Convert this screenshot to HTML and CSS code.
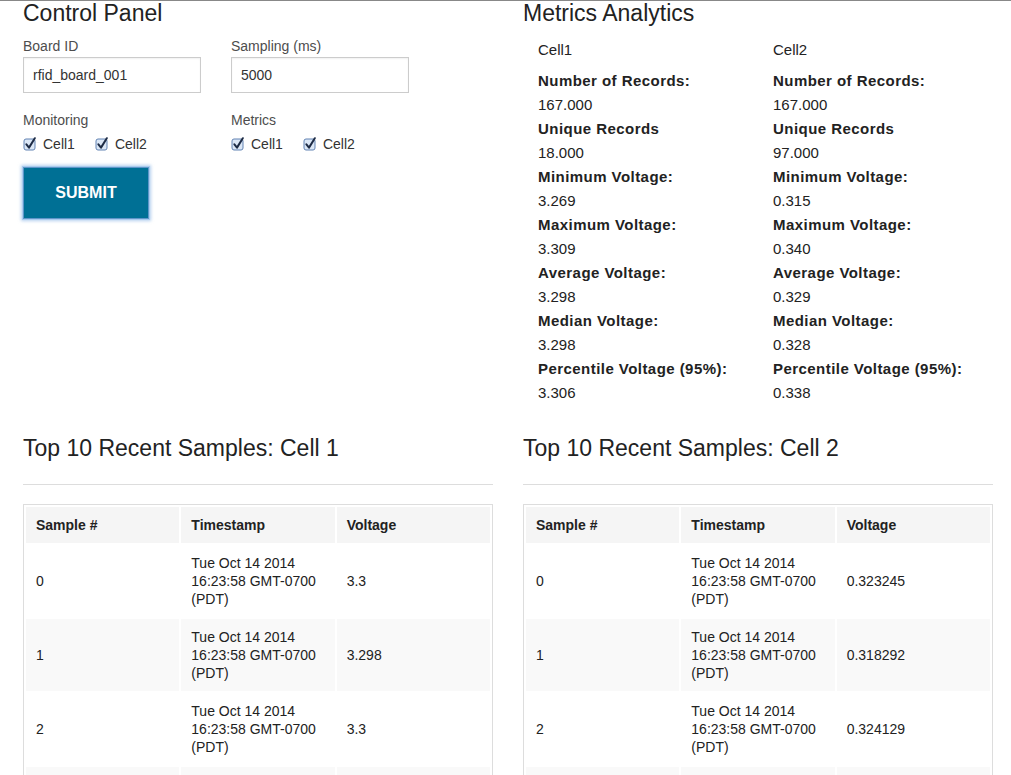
FILE: index.html
```html
<!DOCTYPE html>
<html>
<head>
<meta charset="utf-8">
<title>Dashboard</title>
<link rel="stylesheet" href="styles.css">
</head>
<body>
<div class="page">
  <div class="top-row">
    <section class="col">
      <h1 class="title">Control Panel</h1>
      <div class="form-grid">
        <div class="field">
          <label class="field-label">Board ID</label>
          <input class="text-input" type="text" value="rfid_board_001">
        </div>
        <div class="field">
          <label class="field-label">Sampling (ms)</label>
          <input class="text-input" type="text" value="5000">
        </div>
        <div class="field">
          <div class="field-label group-label">Monitoring</div>
          <div class="checks">
            <label class="check"><svg class="cb" viewBox="0 0 14 14" width="14" height="14"><rect x="1" y="2" width="11" height="11" rx="2" fill="#dbe7f6" stroke="#6283b3"/><path d="M3.4 7.4 L6 10.6 L11.8 1.2" fill="none" stroke="#1d2b45" stroke-width="2" stroke-linecap="round" stroke-linejoin="round"/></svg>Cell1</label>
            <label class="check"><svg class="cb" viewBox="0 0 14 14" width="14" height="14"><rect x="1" y="2" width="11" height="11" rx="2" fill="#dbe7f6" stroke="#6283b3"/><path d="M3.4 7.4 L6 10.6 L11.8 1.2" fill="none" stroke="#1d2b45" stroke-width="2" stroke-linecap="round" stroke-linejoin="round"/></svg>Cell2</label>
          </div>
        </div>
        <div class="field">
          <div class="field-label group-label">Metrics</div>
          <div class="checks">
            <label class="check"><svg class="cb" viewBox="0 0 14 14" width="14" height="14"><rect x="1" y="2" width="11" height="11" rx="2" fill="#dbe7f6" stroke="#6283b3"/><path d="M3.4 7.4 L6 10.6 L11.8 1.2" fill="none" stroke="#1d2b45" stroke-width="2" stroke-linecap="round" stroke-linejoin="round"/></svg>Cell1</label>
            <label class="check"><svg class="cb" viewBox="0 0 14 14" width="14" height="14"><rect x="1" y="2" width="11" height="11" rx="2" fill="#dbe7f6" stroke="#6283b3"/><path d="M3.4 7.4 L6 10.6 L11.8 1.2" fill="none" stroke="#1d2b45" stroke-width="2" stroke-linecap="round" stroke-linejoin="round"/></svg>Cell2</label>
          </div>
        </div>
      </div>
      <button class="submit" type="button">SUBMIT</button>
    </section>

    <section class="col">
      <h1 class="title">Metrics Analytics</h1>
      <div class="metrics">
        <div class="metric-col">
          <div class="cell-name">Cell1</div>
          <div class="m-label">Number of Records:</div><div class="m-value">167.000</div>
          <div class="m-label">Unique Records</div><div class="m-value">18.000</div>
          <div class="m-label">Minimum Voltage:</div><div class="m-value">3.269</div>
          <div class="m-label">Maximum Voltage:</div><div class="m-value">3.309</div>
          <div class="m-label">Average Voltage:</div><div class="m-value">3.298</div>
          <div class="m-label">Median Voltage:</div><div class="m-value">3.298</div>
          <div class="m-label">Percentile Voltage (95%):</div><div class="m-value">3.306</div>
        </div>
        <div class="metric-col">
          <div class="cell-name">Cell2</div>
          <div class="m-label">Number of Records:</div><div class="m-value">167.000</div>
          <div class="m-label">Unique Records</div><div class="m-value">97.000</div>
          <div class="m-label">Minimum Voltage:</div><div class="m-value">0.315</div>
          <div class="m-label">Maximum Voltage:</div><div class="m-value">0.340</div>
          <div class="m-label">Average Voltage:</div><div class="m-value">0.329</div>
          <div class="m-label">Median Voltage:</div><div class="m-value">0.328</div>
          <div class="m-label">Percentile Voltage (95%):</div><div class="m-value">0.338</div>
        </div>
      </div>
    </section>
  </div>

  <div class="bottom-row">
    <section class="col">
      <h2 class="title">Top 10 Recent Samples: Cell 1</h2>
      <hr class="rule">
      <table class="samples">
        <thead><tr><th>Sample #</th><th>Timestamp</th><th>Voltage</th></tr></thead>
        <tbody>
          <tr><td>0</td><td>Tue Oct 14 2014 16:23:58 GMT-0700 (PDT)</td><td>3.3</td></tr>
          <tr><td>1</td><td>Tue Oct 14 2014 16:23:58 GMT-0700 (PDT)</td><td>3.298</td></tr>
          <tr><td>2</td><td>Tue Oct 14 2014 16:23:58 GMT-0700 (PDT)</td><td>3.3</td></tr>
          <tr><td>3</td><td>Tue Oct 14 2014 16:23:58 GMT-0700 (PDT)</td><td>3.298</td></tr>
        </tbody>
      </table>
    </section>
    <section class="col">
      <h2 class="title">Top 10 Recent Samples: Cell 2</h2>
      <hr class="rule">
      <table class="samples">
        <thead><tr><th>Sample #</th><th>Timestamp</th><th>Voltage</th></tr></thead>
        <tbody>
          <tr><td>0</td><td>Tue Oct 14 2014 16:23:58 GMT-0700 (PDT)</td><td>0.323245</td></tr>
          <tr><td>1</td><td>Tue Oct 14 2014 16:23:58 GMT-0700 (PDT)</td><td>0.318292</td></tr>
          <tr><td>2</td><td>Tue Oct 14 2014 16:23:58 GMT-0700 (PDT)</td><td>0.324129</td></tr>
          <tr><td>3</td><td>Tue Oct 14 2014 16:23:58 GMT-0700 (PDT)</td><td>0.329411</td></tr>
        </tbody>
      </table>
    </section>
  </div>
</div>
</body>
</html>
```

FILE: styles.css
```css
html, body {
  margin: 0;
  padding: 0;
  background: #fff;
}
body {
  font-family: "Liberation Sans", Arial, Helvetica, sans-serif;
  color: #222;
  border-top: 1px solid #888;
  overflow: hidden;
}
.page {
  padding: 0 0 0 23px;
}
.top-row, .bottom-row {
  display: grid;
  grid-template-columns: 470px 470px;
  column-gap: 30px;
}
.bottom-row {
  margin-top: 31px;
}
.title {
  margin: 0;
  font-size: 23px;
  line-height: 24px;
  font-weight: normal;
  color: #222;
}

/* control panel */
.form-grid {
  display: grid;
  grid-template-columns: 178px 178px;
  column-gap: 30px;
  row-gap: 18px;
  margin-top: 12px;
}
.field {
  display: flex;
  flex-direction: column;
}
.field-label {
  font-size: 14px;
  line-height: 18px;
  color: #4d4d4d;
  margin-bottom: 2px;
}
.group-label {
  margin-bottom: 6px;
}
.text-input {
  box-sizing: border-box;
  width: 178px;
  height: 36px;
  margin: 0;
  padding: 0 9px;
  border: 1px solid #ccc;
  border-radius: 0;
  font-family: "Liberation Sans", Arial, sans-serif;
  font-size: 14px;
  color: #333;
  background: #fff;
  box-shadow: inset 0 1px 2px rgba(0,0,0,0.06);
}
.checks {
  display: flex;
  gap: 20px;
}
.check {
  display: flex;
  align-items: center;
  gap: 6px;
  font-size: 14px;
  line-height: 18px;
  color: #333;
}
.cb {
  display: block;
  margin-top: -1px;
}
.submit {
  display: block;
  margin-top: 14px;
  width: 126px;
  height: 52px;
  box-sizing: border-box;
  background: #007095;
  border: 1px solid #5f96c8;
  box-shadow: 0 0 0 1px #a9cbee, 0 0 3px 2px rgba(120,170,225,0.55);
  color: #fff;
  font-family: "Liberation Sans", Arial, sans-serif;
  font-weight: bold;
  font-size: 16px;
  padding: 0;
}

/* metrics */
.metrics {
  display: grid;
  grid-template-columns: 235px 235px;
  margin-top: 13px;
}
.metric-col {
  padding-left: 15px;
  font-size: 15px;
  line-height: 24px;
}
.cell-name {
  margin-bottom: 7px;
}
.m-label {
  font-weight: bold;
  letter-spacing: 0.45px;
}

/* tables */
.rule {
  border: 0;
  border-top: 1px solid #ddd;
  margin: 24px 0 19px;
  height: 0;
}
.samples {
  width: 100%;
  table-layout: fixed;
  border: 1px solid #ddd;
  border-spacing: 2px;
  font-size: 14px;
  line-height: 18px;
  color: #222;
}
.samples th {
  background: #f5f5f5;
  font-weight: bold;
  text-align: left;
  padding: 9px 10px;
}
.samples td {
  padding: 9px 10px;
  vertical-align: middle;
}
.samples tbody tr:nth-child(even) td {
  background: #f9f9f9;
}
```
